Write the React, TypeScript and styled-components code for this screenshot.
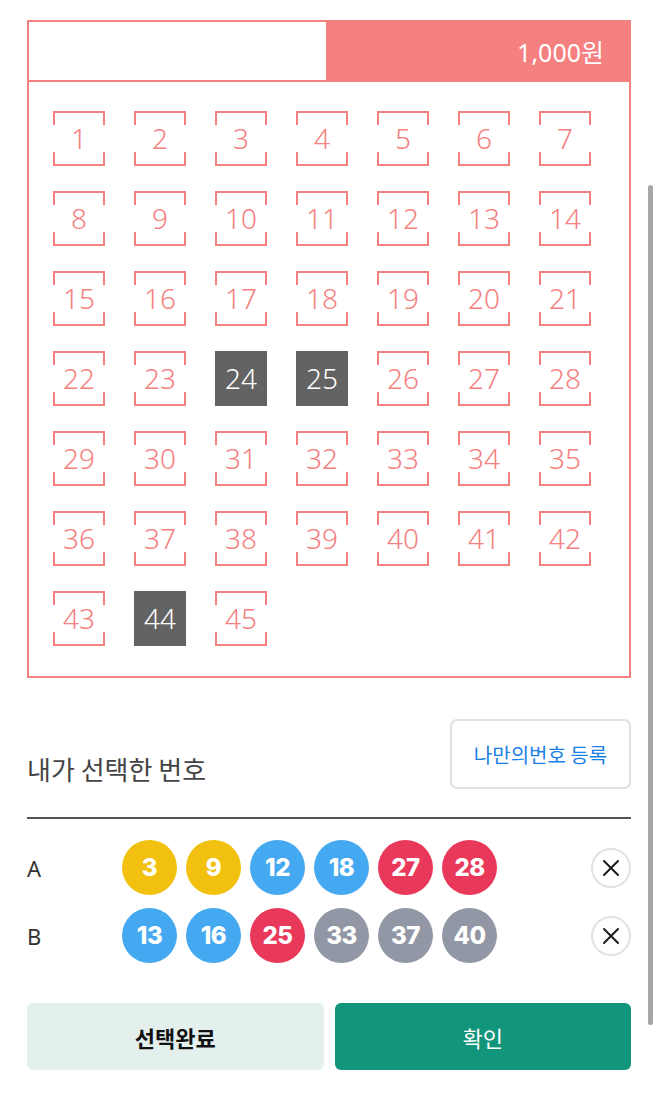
import React from 'react'
import styled, { createGlobalStyle } from 'styled-components'

const pink = '#f58080'
const numbers = Array.from({ length: 45 }, (_, i) => i + 1)
const picked = [24, 25, 44]

const games: { label: string; balls: number[] }[] = [
	{ label: 'A', balls: [3, 9, 12, 18, 27, 28] },
	{ label: 'B', balls: [13, 16, 25, 33, 37, 40] }
]

const ballColor = (n: number) => {
	if (n <= 10) return '#f2c10f'
	if (n <= 20) return '#45a9f1'
	if (n <= 30) return '#e9395a'
	return '#9297a6'
}

const App = () => {
	return (
		<Page>
			<GlobalStyle />
			<Board>
				<BoardHeader>
					<HeaderBlank />
					<Price>1,000원</Price>
				</BoardHeader>
				<NumberGrid>
					{numbers.map(n => (
						<Cell key={n} selected={picked.includes(n)}>
							{n}
						</Cell>
					))}
				</NumberGrid>
			</Board>

			<TitleRow>
				<Title>내가 선택한 번호</Title>
				<OutlineButton>나만의번호 등록</OutlineButton>
			</TitleRow>
			<Divider />

			<Games>
				{games.map(g => (
					<GameRow key={g.label}>
						<GameLabel>{g.label}</GameLabel>
						<Balls>
							{g.balls.map(n => (
								<LottoBall key={n} color={ballColor(n)}>
									{n}
								</LottoBall>
							))}
						</Balls>
						<RemoveButton aria-label="삭제">
							<svg width="20" height="20" viewBox="0 0 20 20">
								<path
									d="M3 3 L17 17 M17 3 L3 17"
									stroke="#1b1b1b"
									strokeWidth="2"
									strokeLinecap="round"
								/>
							</svg>
						</RemoveButton>
					</GameRow>
				))}
			</Games>

			<Actions>
				<ActionButton variant="light">선택완료</ActionButton>
				<ActionButton variant="primary">확인</ActionButton>
			</Actions>
			<ScrollThumb />
		</Page>
	)
}

export default App

const GlobalStyle = createGlobalStyle`
	html, body {
		margin: 0;
		padding: 0;
		background: #fff;
	}
	body {
		font-family: 'Noto Sans', 'Noto Sans CJK KR', sans-serif;
	}
`

const Page = styled.main`
	position: relative;
	width: 658px;
	height: 1101px;
	box-sizing: border-box;
	padding: 20px 27px 0;
`

const Board = styled.section`
	border: 2px solid ${pink};
	box-sizing: border-box;
	width: 604px;
	height: 658px;
`

const BoardHeader = styled.div`
	display: flex;
	height: 58px;
	border-bottom: 2px solid ${pink};
`

const HeaderBlank = styled.div`
	width: 297px;
	background: #fff;
`

const Price = styled.div`
	flex: 1;
	background: ${pink};
	color: #fff;
	display: flex;
	align-items: center;
	justify-content: flex-end;
	padding-right: 25px;
	font-family: 'Noto Sans', 'Noto Sans CJK KR', sans-serif;
	font-size: 25px;
	font-weight: 400;
`

const NumberGrid = styled.div`
	display: grid;
	grid-template-columns: repeat(7, 52px);
	grid-auto-rows: 55px;
	column-gap: 29px;
	row-gap: 25px;
	padding: 29px 0 0 24px;
`

const Cell = styled.div<{ selected?: boolean }>`
	position: relative;
	display: flex;
	align-items: center;
	justify-content: center;
	padding-bottom: 2px;
	box-sizing: border-box;
	font-family: 'Noto Sans', sans-serif;
	font-weight: 300;
	font-size: 28px;
	color: ${({ selected }) => (selected ? '#fff' : pink)};
	background: ${({ selected }) => (selected ? '#636363' : 'transparent')};

	&::before,
	&::after {
		content: '';
		position: absolute;
		left: 0;
		right: 0;
		height: 14px;
		border: 2px solid ${pink};
		box-sizing: border-box;
		display: ${({ selected }) => (selected ? 'none' : 'block')};
	}
	&::before {
		top: 0;
		border-bottom: none;
	}
	&::after {
		bottom: 0;
		border-top: none;
	}
`

const TitleRow = styled.div`
	display: flex;
	justify-content: space-between;
	align-items: flex-end;
	margin-top: 41px;
`

const Title = styled.h2`
	margin: 0 0 2px;
	font-family: 'Noto Sans CJK KR', sans-serif;
	font-size: 26px;
	font-weight: 400;
	color: #444;
`

const OutlineButton = styled.button`
	width: 181px;
	height: 70px;
	border: 2px solid #e0e0e0;
	border-radius: 7px;
	background: #fff;
	color: #1a80e5;
	font-family: 'Noto Sans CJK KR', sans-serif;
	font-size: 20px;
`

const Divider = styled.hr`
	margin: 28px 0 0;
	border: none;
	border-top: 2px solid #555;
`

const Games = styled.div`
	display: flex;
	flex-direction: column;
	gap: 13px;
	padding-top: 21px;
`

const GameRow = styled.div`
	display: flex;
	align-items: center;
	height: 55px;
`

const GameLabel = styled.span`
	width: 95px;
	font-family: 'Noto Sans', sans-serif;
	font-size: 22px;
	color: #333;
`

const Balls = styled.div`
	display: flex;
	gap: 9px;
	flex: 1;
`

const LottoBall = styled.span<{ color: string }>`
	width: 55px;
	height: 55px;
	border-radius: 50%;
	background: ${({ color }) => color};
	color: #fff;
	display: flex;
	align-items: center;
	justify-content: center;
	font-family: 'Inter', sans-serif;
	font-weight: 800;
	font-size: 24px;
	letter-spacing: -0.5px;
`

const RemoveButton = styled.button`
	width: 40px;
	height: 40px;
	border-radius: 50%;
	border: 2px solid #e2e2e2;
	background: #fff;
	padding: 0;
	display: flex;
	align-items: center;
	justify-content: center;
`

const Actions = styled.div`
	display: flex;
	gap: 11px;
	margin-top: 40px;
`

const ActionButton = styled.button<{ variant: 'light' | 'primary' }>`
	flex: 1;
	height: 67px;
	border: none;
	border-radius: 6px;
	font-family: 'Noto Sans CJK KR', sans-serif;
	font-size: 22px;
	font-weight: ${({ variant }) => (variant === 'light' ? 700 : 400)};
	background: ${({ variant }) => (variant === 'light' ? '#e3f0ed' : '#12957a')};
	color: ${({ variant }) => (variant === 'light' ? '#111' : '#fff')};
`

const ScrollThumb = styled.div`
	position: absolute;
	right: 5px;
	top: 185px;
	width: 5px;
	height: 840px;
	border-radius: 3px;
	background: #a6a6a6;
`
